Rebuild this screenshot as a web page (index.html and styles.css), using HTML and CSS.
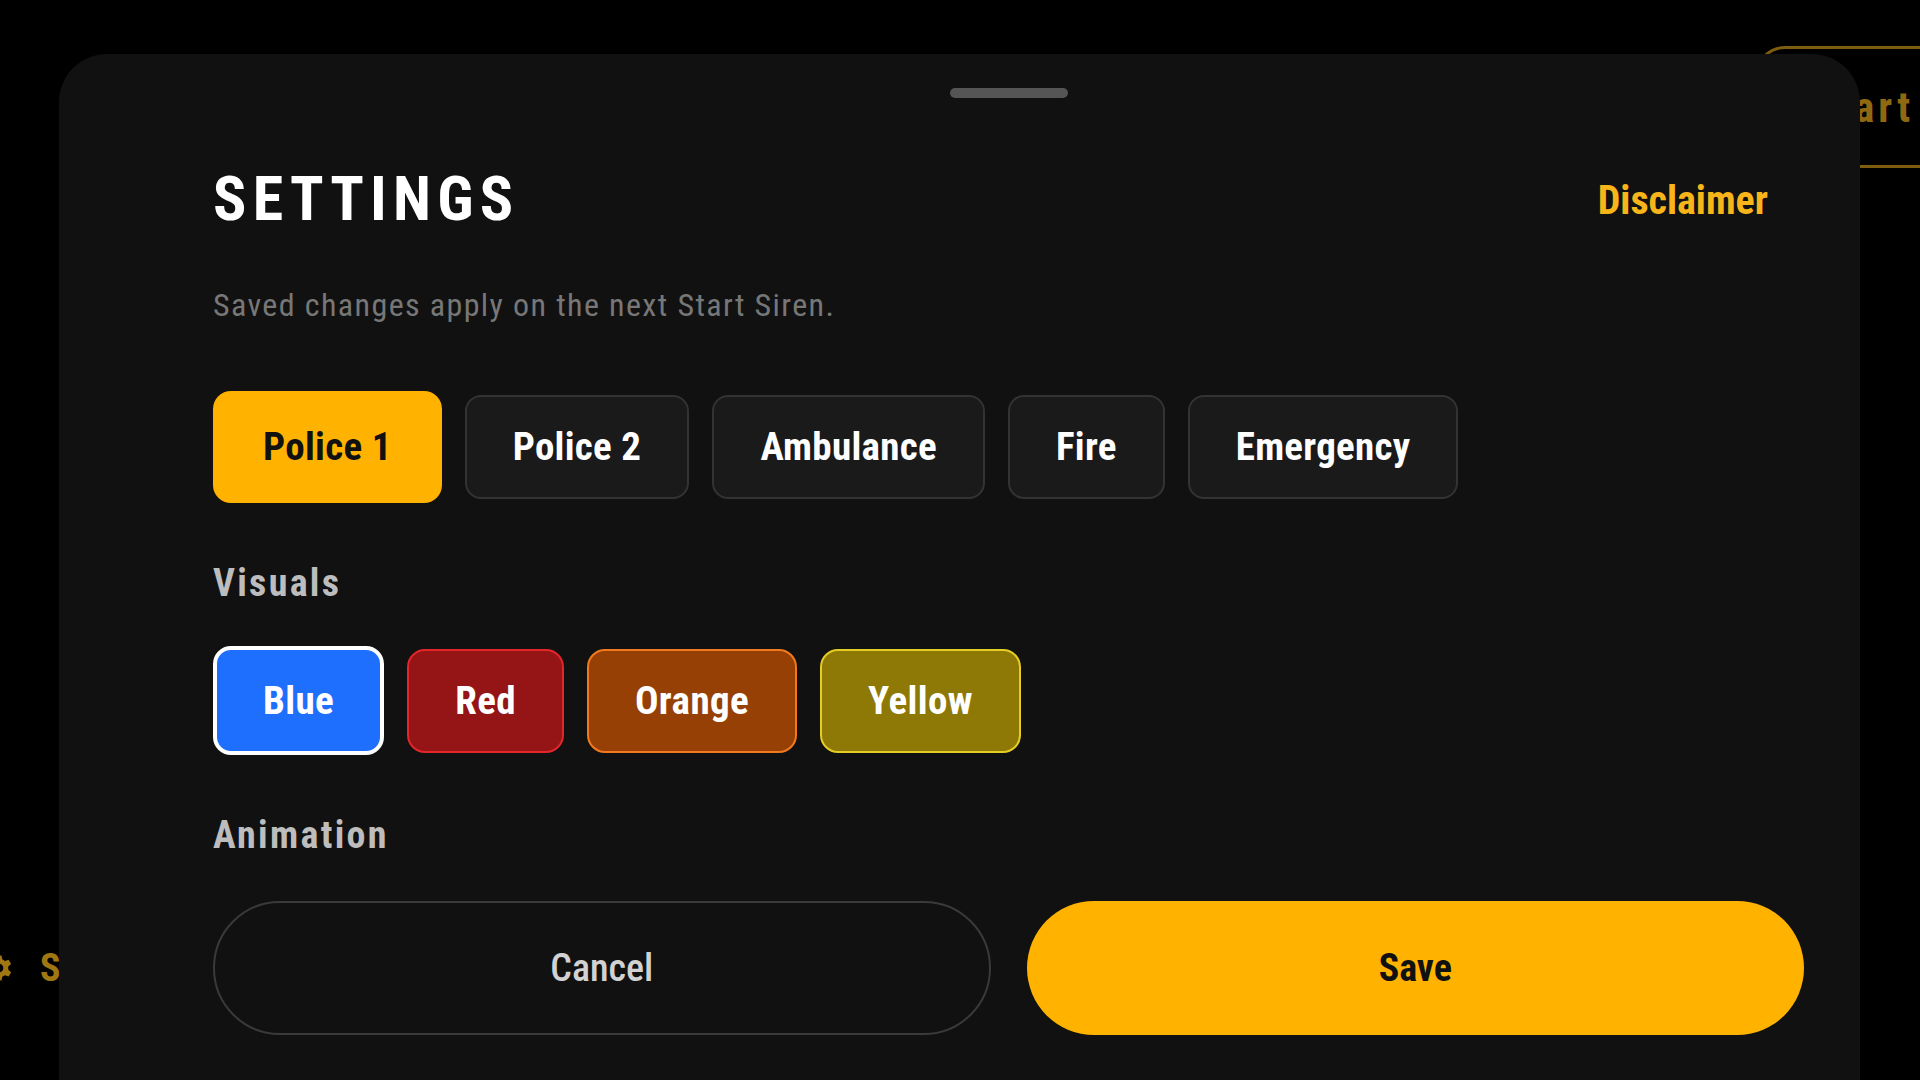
FILE: index.html
```html
<!DOCTYPE html>
<html lang="en">
<head>
    <meta charset="UTF-8">
    <meta name="viewport" content="width=device-width, initial-scale=1.0">
    <title>Settings</title>
    <link rel="stylesheet" href="styles.css">
</head>
<body>
    <!-- Page behind the sheet -->
    <div class="start-btn">Start</div>
    <div class="side-link">
        <svg class="gear" viewBox="0 0 24 24" width="30" height="30">
            <path d="M10 2h4l.6 3 2.2 1.3 2.9-1 2 3.4-2.3 2v2.6l2.3 2-2 3.4-2.9-1-2.2 1.3-.6 3h-4l-.6-3-2.2-1.3-2.9 1-2-3.4 2.3-2v-2.6l-2.3-2 2-3.4 2.9 1L9.4 5z M12 8.5a3.5 3.5 0 1 0 0 7a3.5 3.5 0 1 0 0-7z" fill="currentColor" fill-rule="evenodd"/>
        </svg>
        <span>Settings</span>
    </div>

    <!-- Bottom sheet -->
    <div class="sheet">
        <div class="handle"></div>

        <div class="sheet-header">
            <h1>SETTINGS</h1>
            <a class="disclaimer" href="#">Disclaimer</a>
        </div>
        <p class="subtitle">Saved changes apply on the next Start Siren.</p>

        <div class="tabs">
            <button class="tab active">Police 1</button>
            <button class="tab">Police 2</button>
            <button class="tab">Ambulance</button>
            <button class="tab">Fire</button>
            <button class="tab">Emergency</button>
        </div>

        <h2 class="section-label">Visuals</h2>
        <div class="swatches">
            <button class="swatch blue selected">Blue</button>
            <button class="swatch red">Red</button>
            <button class="swatch orange">Orange</button>
            <button class="swatch yellow">Yellow</button>
        </div>

        <h2 class="section-label">Animation</h2>

        <div class="actions">
            <button class="btn cancel">Cancel</button>
            <button class="btn save">Save</button>
        </div>
    </div>
</body>
</html>
```

FILE: styles.css
```css
/* General */
* {
    margin: 0;
    padding: 0;
    box-sizing: border-box;
}

body {
    width: 1920px;
    height: 1080px;
    overflow: hidden;
    position: relative;
    background-color: #000;
    font-family: 'Roboto Condensed', 'Roboto', sans-serif;
    font-stretch: condensed;
    color: #fff;
}

button {
    font-family: inherit;
    font-stretch: condensed;
    cursor: pointer;
}

/* Background page */
.start-btn {
    position: absolute;
    left: 1755px;
    top: 46px;
    width: 320px;
    height: 122px;
    border: 3px solid #7f5d0e;
    border-radius: 30px;
    display: flex;
    align-items: center;
    padding-left: 53px;
    color: #8f6912;
    font-size: 42px;
    font-weight: 700;
    letter-spacing: 4px;
}

.side-link {
    position: absolute;
    left: -16px;
    top: 946px;
    display: flex;
    align-items: center;
    gap: 26px;
    color: #a07712;
    font-size: 38px;
    font-weight: 700;
    letter-spacing: 3px;
}

/* Sheet */
.sheet {
    position: absolute;
    left: 59px;
    top: 54px;
    right: 60px;
    bottom: -60px;
    background-color: #111111;
    border-radius: 48px 48px 0 0;
    padding: 34px 56px 0 154px;
}

.handle {
    width: 118px;
    height: 10px;
    border-radius: 5px;
    background-color: #555;
    margin: 0 auto;
}

.sheet-header {
    display: flex;
    justify-content: space-between;
    align-items: center;
    margin-top: 70px;
    padding-right: 36px;
}

.sheet-header h1 {
    font-size: 62px;
    line-height: 62px;
    font-weight: 700;
    letter-spacing: 6.2px;
    color: #fff;
}

.disclaimer {
    margin-top: 4px;
    font-size: 40px;
    line-height: 40px;
    font-weight: 700;
    color: #f8b51a;
    text-decoration: none;
}

.subtitle {
    margin-top: 59px;
    font-size: 32px;
    line-height: 32px;
    color: #777;
    letter-spacing: 1.4px;
}

/* Sound tabs */
.tabs {
    display: flex;
    align-items: center;
    gap: 23px;
    margin-top: 70px;
}

.tab {
    height: 104px;
    padding: 0 46px;
    border: 2px solid #333;
    border-radius: 16px;
    background-color: #1a1a1a;
    color: #fff;
    font-size: 39px;
    font-weight: 700;
    letter-spacing: 0.3px;
}

.tab.active {
    height: 112px;
    padding: 0 50px;
    border: none;
    border-radius: 18px;
    background-color: #ffb300;
    color: #111;
}

.section-label {
    margin-top: 61px;
    font-size: 38px;
    line-height: 38px;
    font-weight: 700;
    color: #bdbdbd;
    letter-spacing: 2.3px;
}

/* Colour swatches */
.swatches {
    display: flex;
    align-items: center;
    gap: 23px;
    margin-top: 44px;
}

.swatch {
    height: 104px;
    padding: 0 46px;
    border: 2px solid transparent;
    border-radius: 18px;
    color: #fff;
    font-size: 39px;
    font-weight: 700;
    letter-spacing: 0.4px;
}

.swatch.selected {
    height: 109px;
    border-width: 4px;
}

.swatch.blue {
    background-color: #1f6fff;
    border-color: #fff;
}

.swatch.red {
    background-color: #951517;
    border-color: #e2262a;
}

.swatch.orange {
    background-color: #974005;
    border-color: #f27a1e;
}

.swatch.yellow {
    background-color: #8e7806;
    border-color: #e4cd24;
}

/* Actions */
.actions {
    display: grid;
    grid-template-columns: 1fr 1fr;
    gap: 36px;
    margin-top: 47px;
}

.btn {
    height: 134px;
    border-radius: 67px;
    font-size: 38px;
    font-weight: 700;
}

.btn.cancel {
    background: transparent;
    border: 2px solid #3a3a3a;
    color: #d2d2d2;
    font-weight: 500;
}

.btn.save {
    background-color: #ffb300;
    border: none;
    color: #111;
}
```
